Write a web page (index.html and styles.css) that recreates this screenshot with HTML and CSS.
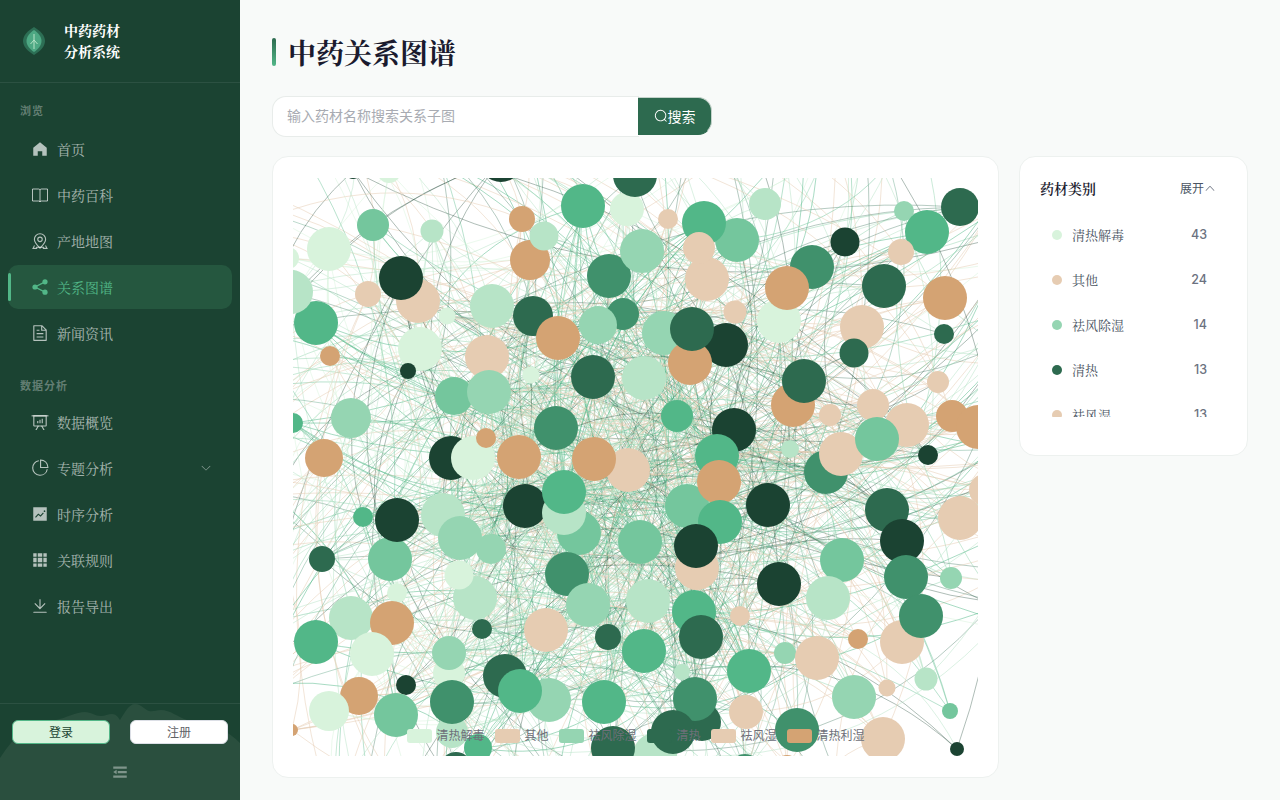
FILE: index.html
```html
<!DOCTYPE html>
<html lang="zh-CN">
<head>
<meta charset="utf-8">
<title>中药关系图谱</title>
<link rel="stylesheet" href="styles.css">
</head>
<body>
<div class="app">
  <aside class="sidebar">
    <header class="brand">
      <svg class="brand-logo" viewBox="0 0 22 28" aria-hidden="true">
        <path class="leaf-outer" d="M11 0C5 3.500 0 8.500 0 14s5 10.500 11 14c6-3.500 11-8.500 11-14S17 3.500 11 0z"/>
        <path class="leaf-inner" d="M11 3C7 5.500 3.500 9.500 3.500 14S7 22.500 11 25c4-2.500 7.500-6.500 7.500-11S15 5.500 11 3z"/>
        <path class="leaf-vein" d="M11 7v15M11 13l-3.500 4M11 13l3.500 4"/>
      </svg>
      <div class="brand-name">中药药材<br>分析系统</div>
    </header>
    <nav class="nav">
      <div class="nav-group">
        <div class="nav-label">浏览</div>
        <a class="nav-item"><svg class="ico" viewBox="0 0 1024 1024"><path d="M512 128 128 447.936V896h255.936V640H640v256h255.936V447.936z"/></svg><span>首页</span></a>
        <a class="nav-item"><svg class="ico ico-line" viewBox="0 0 18 18"><path d="M1.500 3h6.200c.7 0 1.300.4 1.300 1.200 0-.8.6-1.200 1.300-1.200h6.200v12h-6.200c-.7 0-1.300.3-1.300 1-.0-.7-.6-1-1.300-1H1.500zM9 4.200V16"/></svg><span>中药百科</span></a>
        <a class="nav-item"><svg class="ico" viewBox="0 0 1024 1024"><path d="M800 416a288 288 0 1 0-576 0c0 118.144 94.528 272.128 288 456.576C705.472 688.128 800 534.144 800 416M512 960C277.312 746.688 160 565.312 160 416a352 352 0 0 1 704 0c0 149.312-117.312 330.688-352 544"/><path d="M512 512a96 96 0 1 0 0-192 96 96 0 0 0 0 192m0 64a160 160 0 1 1 0-320 160 160 0 0 1 0 320m345.600 192L960 960H672v-64H352v64H64l102.400-192zm-68.928 0H235.328l-76.800 128H288v-64h448v64h129.472z"/></svg><span>产地地图</span></a>
        <a class="nav-item is-active"><svg class="ico" viewBox="0 0 18 18"><circle cx="4" cy="9" r="2.600"/><circle cx="14" cy="3.800" r="2.600"/><circle cx="14" cy="14.200" r="2.600"/><path class="share-link" d="M14 3.800 4 9l10 5.200"/></svg><span>关系图谱</span></a>
        <a class="nav-item"><svg class="ico" viewBox="0 0 1024 1024"><path d="M832 384H576V128H192v768h640zm-26.496-64L640 154.496V320zM160 64h480l256 256v608a32 32 0 0 1-32 32H160a32 32 0 0 1-32-32V96a32 32 0 0 1 32-32m160 448h384v64H320zm0-192h160v64H320zm0 384h384v64H320z"/></svg><span>新闻资讯</span></a>
      </div>
      <div class="nav-group">
        <div class="nav-label">数据分析</div>
        <a class="nav-item"><svg class="ico" viewBox="0 0 1024 1024"><path d="M32 128h960v64H32z"/><path d="M192 192v512h640V192zm-64-64h768v576a64 64 0 0 1-64 64H192a64 64 0 0 1-64-64z"/><path d="M322.176 960H248.320l144.640-250.560 55.424 32zm453.888 0h-73.856L576 741.440l55.424-32zM352 448h64v128h-64zM480 384h64v192h-64zM608 320h64v256h-64z"/></svg><span>数据概览</span></a>
        <a class="nav-item"><svg class="ico" viewBox="0 0 1024 1024"><path d="M448 68.480v64.832A384.128 384.128 0 0 0 512 896a384.128 384.128 0 0 0 378.688-320h64.768A448.128 448.128 0 0 1 64 512 448.128 448.128 0 0 1 448 68.480z"/><path d="M576 97.280V448h350.720a384.064 384.064 0 0 0-350.720-350.720zM512 64V33.152A448 448 0 0 1 990.848 512H512z"/></svg><span>专题分析</span><svg class="ico-chev" viewBox="0 0 1024 1024"><path d="M831.872 340.864 512 652.672 192.128 340.864a30.592 30.592 0 0 0-42.752 0 29.120 29.120 0 0 0 0 41.600L489.664 714.240a32 32 0 0 0 44.672 0l340.288-331.712a29.120 29.120 0 0 0 0-41.728 30.592 30.592 0 0 0-42.752 0z"/></svg></a>
        <a class="nav-item"><svg class="ico" viewBox="0 0 1024 1024"><path d="M128 896V128h768v768zm291.712-327.296 128 102.400 180.160-201.792-47.744-42.624-139.840 156.608-128-102.400-180.160 201.792 47.744 42.624zM816 352a48 48 0 1 0-96 0 48 48 0 0 0 96 0"/></svg><span>时序分析</span></a>
        <a class="nav-item"><svg class="ico" viewBox="0 0 1024 1024"><path d="M640 384v256H384V384zm64 0h192v256H704zm-64 512H384V704h256zm64 0V704h192v192zm-64-768v192H384V128zm64 0h192v192H704zM320 384v256H128V384zm0 512H128V704h192zm0-768v192H128V128z"/></svg><span>关联规则</span></a>
        <a class="nav-item"><svg class="ico" viewBox="0 0 1024 1024"><path d="M160 832h704a32 32 0 1 1 0 64H160a32 32 0 1 1 0-64m384-253.696 236.288-236.352 45.248 45.248L508.800 704 192 387.200l45.248-45.248L480 584.704V128h64z"/></svg><span>报告导出</span></a>
      </div>
    </nav>
    <footer class="side-foot">
      <svg class="mountains" viewBox="0 0 240 96" preserveAspectRatio="none" aria-hidden="true">
        <path d="M0 54C8 42 14 34 22 29 32 23 44 19 56 16 66 14 76 8 85 8 91 8 95 12 101 12 105 12 108 10 112 10 116 10 118 13 120 16 125 8 129 0 135 0 141 0 144 5 149 7 153 8 156 6 161 6 170 6 178 13 187 16 197 19 208 20 217 23 226 27 234 33 240 39V96H0z"/>
      </svg>
      <div class="auth-row">
        <button class="btn btn-login">登录</button>
        <button class="btn btn-reg">注册</button>
      </div>
      <svg class="fold" viewBox="0 0 1024 1024"><path d="M896 192H128v128h768zm0 256H384v128h512zm0 256H128v128h768zM320 384 128 512l192 128z"/></svg>
    </footer>
  </aside>

  <main class="main">
    <h1 class="page-title">中药关系图谱</h1>
    <div class="search">
      <input class="search-input" type="text" placeholder="输入药材名称搜索关系子图">
      <button class="search-btn"><svg class="search-ico" viewBox="0 0 1024 1024"><path d="m795.904 750.720 124.992 124.928a32 32 0 0 1-45.248 45.248L750.656 795.904a416 416 0 1 1 45.248-45.248zM480 832a352 352 0 1 0 0-704 352 352 0 0 0 0 704"/></svg>搜索</button>
    </div>
    <div class="content">
      <section class="card chart-card">
        <div class="chart">
          <svg id="graph" class="graph" viewBox="293 178 685 578" aria-label="中药关系图谱"></svg>
          <div class="legend">
            <div class="lg"><i class="sw c-a"></i><span>清热解毒</span></div>
            <div class="lg"><i class="sw c-e"></i><span>其他</span></div>
            <div class="lg"><i class="sw c-g"></i><span>祛风除湿</span></div>
            <div class="lg"><i class="sw c-d"></i><span>清热</span></div>
            <div class="lg"><i class="sw c-e"></i><span>祛风湿</span></div>
            <div class="lg"><i class="sw c-t"></i><span>清热利湿</span></div>
          </div>
        </div>
      </section>
      <section class="card side-card">
        <div class="side-head">
          <h2 class="side-title">药材类别</h2>
          <button class="toggle">展开<svg class="toggle-ico" viewBox="0 0 1024 1024"><path d="m488.832 344.320-339.840 356.672a32 32 0 0 0 0 44.160l.384.384a29.440 29.440 0 0 0 42.688 0l320-335.872 319.872 335.872a29.440 29.440 0 0 0 42.688 0l.384-.384a32 32 0 0 0 0-44.160L535.168 344.320a32 32 0 0 0-46.336 0"/></svg></button>
        </div>
        <ul class="cat-list">
          <li class="cat"><i class="dot c-a"></i><span class="cat-name">清热解毒</span><b class="cat-num">43</b></li>
          <li class="cat"><i class="dot c-e"></i><span class="cat-name">其他</span><b class="cat-num">24</b></li>
          <li class="cat"><i class="dot c-g"></i><span class="cat-name">祛风除湿</span><b class="cat-num">14</b></li>
          <li class="cat"><i class="dot c-d"></i><span class="cat-name">清热</span><b class="cat-num">13</b></li>
          <li class="cat"><i class="dot c-e"></i><span class="cat-name">祛风湿</span><b class="cat-num">13</b></li>
        </ul>
      </section>
    </div>
  </main>
</div>
<script src="graph.js"></script>
</body>
</html>
```
FILE: styles.css
```css
* { box-sizing: border-box; }
html, body { margin: 0; height: 100%; }
body {
  font-family: Inter, "Noto Serif CJK SC", "Noto Sans CJK SC", serif;
  background: #f8faf9;
  color: #1a1a2e;
  overflow: hidden;
}
.app { display: flex; height: 800px; }

/* sidebar */
.sidebar {
  width: 240px;
  flex: none;
  display: flex;
  flex-direction: column;
  background: #1b4332;
}
.brand {
  height: 83px;
  flex: none;
  display: flex;
  align-items: center;
  gap: 19px;
  padding: 0 0 0 23px;
  border-bottom: 1px solid rgba(255, 255, 255, .08);
}
.brand-logo { width: 22px; height: 28px; flex: none; }
.leaf-outer { fill: #2d6f55; }
.leaf-inner { fill: #4da883; }
.leaf-vein { fill: none; stroke: #b7e4c7; stroke-width: 1; }
.brand-name { font-size: 14px; line-height: 21px; font-weight: 700; color: #fff; }
.nav { flex: 1; padding-top: 20px; }
.nav-group + .nav-group { margin-top: 23px; }
.nav-group + .nav-group .nav-label { margin-bottom: 8px; }
.nav-label {
  height: 14px;
  line-height: 14px;
  margin-bottom: 10px;
  padding-left: 20px;
  font-family: "Noto Sans CJK SC", sans-serif;
  font-size: 11px;
  font-weight: 700;
  letter-spacing: 1px;
  color: rgba(255, 255, 255, .32);
}
.nav-item {
  position: relative;
  display: flex;
  align-items: center;
  height: 44px;
  margin: 0 8px 2px;
  padding-left: 23px;
  border-radius: 10px;
  font-size: 14px;
  color: rgba(255, 255, 255, .62);
}
.ico { width: 18px; height: 18px; margin-right: 8px; flex: none; fill: rgba(255, 255, 255, .68); }
.ico-line { fill: none; stroke: rgba(255, 255, 255, .68); stroke-width: 1; }
.ico-chev { width: 12px; height: 12px; margin-left: auto; margin-right: 20px; fill: rgba(255, 255, 255, .5); }
.share-link { fill: none; stroke: currentColor; stroke-width: 1.300; }
.nav-item.is-active { background: #25573f; color: #52b788; }
.nav-item.is-active .ico { fill: #52b788; }
.nav-item.is-active::before {
  content: "";
  position: absolute;
  left: 0;
  top: 8px;
  width: 3px;
  height: 28px;
  border-radius: 2px;
  background: #52b788;
}
.side-foot {
  position: relative;
  height: 97px;
  flex: none;
  display: flex;
  flex-direction: column;
  align-items: center;
  padding: 16px 12px 0;
  border-top: 1px solid rgba(255, 255, 255, .08);
}
.mountains { position: absolute; left: 0; right: 0; bottom: 0; width: 240px; height: 96px; fill: #2a4f3e; }
.auth-row { position: relative; display: flex; justify-content: space-between; width: 100%; }
.btn {
  width: 98px;
  height: 24px;
  padding: 0 0 2px;
  border-radius: 6px;
  font: 12px "Noto Sans CJK SC", sans-serif;
}
.btn-login { background: #d8f3dc; border: 1px solid #52b788; color: #1b4332; }
.btn-reg { background: #fff; border: 1px solid #dcdfe6; color: #606266; }
.fold { position: relative; width: 18px; height: 18px; margin-top: 19px; fill: rgba(255, 255, 255, .4); }

/* main */
.main {
  flex: 1;
  min-width: 0;
  display: flex;
  flex-direction: column;
  padding: 38px 32px 22px;
}
.page-title {
  position: relative;
  margin: 0;
  padding-left: 16px;
  height: 28px;
  line-height: 28px;
  font-family: "Noto Serif CJK SC", "Noto Sans CJK SC", serif;
  font-size: 28px;
  font-weight: 700;
  color: #1a1a2e;
}
.page-title::before {
  content: "";
  position: absolute;
  left: 0;
  top: 0;
  width: 4px;
  height: 28px;
  border-radius: 2px;
  background: linear-gradient(180deg, #2d6a4f, #52b788);
}
.search { display: flex; align-items: flex-start; width: 440px; height: 41px; margin-top: 30px; }
.search-input {
  width: 367px;
  height: 41px;
  padding: 0 14px 3px;
  border: 1px solid #e8ecea;
  border-radius: 14px 0 0 14px;
  border-right: 0;
  background: #fff;
  outline: 0;
  font: 14px "Noto Sans CJK SC", sans-serif;
  color: #1a1a2e;
}
.search-input::placeholder { color: #a8abb2; opacity: 1; }
.search-btn {
  display: flex;
  align-items: center;
  justify-content: center;
  width: 74px;
  height: 38px;
  margin: 1px 0 0 -1px;
  padding: 0;
  border-style: solid;
  border-width: 1px 1px 1px 0;
  border-color: #c4d3cb #c4d3cb #2d6a4f;
  border-radius: 0 14px 14px 0;
  background: #2d6a4f;
  color: #fff;
  font: 14px "Noto Sans CJK SC", sans-serif;
}
.search-ico { width: 14px; height: 14px; fill: #fff; }
.content { flex: 1; min-height: 0; display: flex; align-items: flex-start; gap: 20px; margin-top: 19px; }
.card { background: #fff; border: 1px solid #edf1ef; border-radius: 16px; }
.chart-card { flex: 1; min-width: 0; height: 622px; padding: 21px 20px; }
.chart { position: relative; height: 578px; }
.graph { display: block; width: 685px; height: 578px; }
.legend {
  position: absolute;
  left: 113.500px;
  top: 550px;
  display: flex;
  gap: 10px;
  align-items: center;
}
.lg { display: flex; align-items: center; gap: 5px; font: 12px/14px "Noto Sans CJK SC", sans-serif; color: #6e7079; }
.lg span { padding-bottom: 2px; }
.sw { width: 25px; height: 14px; border-radius: 3px; }
.c-a { background: #d8f3dc; }
.c-e { background: #e6ccb2; }
.c-g { background: #95d5b2; }
.c-d { background: #2d6a4f; }
.c-t { background: #d4a373; }

.side-card { width: 229px; flex: none; height: 300px; padding: 0 20px; }
.side-head { display: flex; align-items: center; justify-content: space-between; height: 49px; margin-top: 6px; padding-right: 11px; }
.side-title { margin: 0; font-size: 14px; font-weight: 600; color: #1a1a2e; font-family: "Noto Serif CJK SC", "Noto Sans CJK SC", serif; }
.toggle { display: flex; align-items: center; padding: 0; border: 0; background: none; font: 12px "Noto Sans CJK SC", sans-serif; color: #4b5563; }
.toggle-ico { width: 12px; height: 12px; fill: #6b7280; }
.cat-list { list-style: none; margin: 0; padding: 0; height: 205px; overflow: hidden; }
.cat { display: flex; align-items: center; height: 45px; padding: 0 20px 0 12px; }
.dot { width: 10px; height: 10px; border-radius: 50%; flex: none; margin-right: 10px; }
.cat-name { font-size: 13px; color: #4b5563; }
.cat-num { margin-left: auto; font-size: 12.500px; font-weight: 500; color: #6b7280; }
```
FILE: graph.js
```js
// Force-graph snapshot: node positions as x y r colour, painted back to front.
var COLORS = { a: '#d8f3dc', e: '#e6ccb2', t: '#d4a373', g: '#95d5b2', m: '#b7e4c7', l: '#74c69d', b: '#52b788', k: '#40916c', d: '#2d6a4f', n: '#1b4332' };
var NODES = [
  '501 160 22 n', '389 171 12 a', '353 171 8 n', '373 225 16 l', '432 231 11.5 m', '329 249 22 a', '288 258 11 a',
  '418 301 22 e', '401 278 22 n', '368 294 13 e', '316 323 22 b', '291 292 22 m', '447 316 8.500 a', '420 349 22 a',
  '330 356 10 t', '408 371 8 n', '487 357 22 e', '492 306 22 m', '454 396 19 l', '489 392 22 g', '533 316 20 d',
  '558 338 22 t', '530 260 20 t', '522 219 13 t', '544 236 14.500 m', '583 206 22 b', '627 209 17 a', '635 175 22 d',
  '609 276 22 k', '642 251 22 g', '623 314 16 k', '598 325 19 g', '593 377 22 d', '531 375 8.500 a', '556 428 22 k',
  '351 418 20 g', '293 423 10 b', '324 458 19 t', '451 458 22 n', '473 458 22 a', '486 438 10 t', '519 457 22 t',
  '628 470 22 e', '594 459 22 t', '765 204 16 m', '668 219 10 e', '737 240 22 l', '704 223 22 b', '707 279 22 e',
  '699 248 16 e', '845 242 14.500 n', '812 267 22 k', '779 321 22 a', '787 288 22 t', '904 211 10 g', '927 232 22 b',
  '960 207 19 d', '901 252 13 e', '884 286 22 d', '945 298 22 t', '862 327 22 e', '854 353 14.500 d', '944 334 10 d',
  '735 312 11.500 e', '726 345 22 n', '664 333 22 g', '690 363 22 t', '692 329 22 d', '644 378 22 m', '793 405 22 t',
  '804 381 22 d', '938 382 11 e', '830 415 11 e', '907 425 22 e', '873 405 16 e', '952 416 16 t', '978 427 22 t',
  '928 455 10 n', '826 472 22 k', '841 454 22 e', '877 439 22 l', '790 449 9 m', '677 416 16 b', '734 430 22 n',
  '717 456 22 b', '687 506 22 l', '719 482 22 t', '720 522 22 b', '768 505 22 n', '887 510 22 d', '902 541 22 n',
  '985 490 16 e', '960 518 22 e', '697 568 22 e', '696 546 22 n', '842 560 22 l', '906 577 22 k', '951 578 11 g',
  '779 584 22 n', '828 598 22 m', '363 517 10 b', '390 559 22 l', '397 520 22 n', '322 559 13 d', '443 515 22 m',
  '491 549 15 g', '460 538 22 g', '525 506 22 n', '579 533 22 l', '564 513 22 m', '564 492 22 b', '640 542 22 l',
  '397 593 10 a', '475 598 22 m', '459 575 14.500 a', '567 574 22 k', '588 605 22 g', '648 601 22 m', '351 618 22 m',
  '392 623 22 t', '372 654 22 a', '316 642 22 b', '482 629 10 d', '546 630 22 e', '608 637 13 d', '644 651 22 b',
  '694 612 22 b', '701 637 22 d', '740 616 10 e', '858 639 10 t', '902 642 22 e', '921 616 22 k', '785 653 11 g',
  '817 658 22 e', '749 671 22 b', '682 672 8 m', '449 673 16 a', '449 653 17 g', '406 685 10 n', '505 676 22 d',
  '359 696 19 t', '329 711 20 a', '396 715 22 l', '452 732 16 m', '452 702 22 k', '549 700 22 g', '520 691 22 b',
  '604 702 22 b', '478 748 14 b', '292 730 6 t', '456 768 16 d', '854 697 22 g', '887 688 8.500 e', '926 679 11.500 m',
  '702 722 19 d', '695 699 22 k', '746 712 17 e', '950 711 8 l', '655 755 22 m', '673 732 22 d', '613 748 22 d',
  '797 730 22 k', '883 739 22 e', '957 749 7 n', '745 770 16 k', '787 767 12 t'
].map(function (s) {
  var p = s.split(' ');
  return { x: +p[0], y: +p[1], r: +p[2], key: p[3], c: COLORS[p[3]] };
});

var seed = 20240611;
function rnd() {
  seed = (seed + 0x6D2B79F5) | 0;
  var t = Math.imul(seed ^ (seed >>> 15), 1 | seed);
  t = (t + Math.imul(t ^ (t >>> 7), 61 | t)) ^ t;
  return ((t ^ (t >>> 14)) >>> 0) / 4294967296;
}

var SVG_NS = 'http://www.w3.org/2000/svg';
var graph = document.getElementById('graph');

function dist2(a) {
  return Math.pow(a.x - 600, 2) + Math.pow(a.y - 500, 2);
}
function near(a, b) {
  return dist2(a) < dist2(b) ? a : b;
}
function pick() {
  return NODES[Math.floor(rnd() * NODES.length)];
}
function anchorOutside() {
  var side = Math.floor(rnd() * 4);
  if (side === 0) return { x: 250 + rnd() * 700, y: 110 + rnd() * 40 };
  if (side === 1) return { x: 220 + rnd() * 50, y: 180 + rnd() * 560 };
  if (side === 2) return { x: 1020, y: 150 + rnd() * 500 };
  return { x: 300 + rnd() * 550, y: 800 };
}

var frag = document.createDocumentFragment();
for (var i = 0; i < 1250; i++) {
  var from = rnd() < 0.3 ? near(pick(), pick()) : pick();
  var to = rnd() < 0.7 ? near(near(pick(), pick()), pick()) : anchorOutside();
  if (from === to) continue;
  var dx = to.x - from.x, dy = to.y - from.y;
  var k = 0.16 + rnd() * 0.14;
  var cx = (from.x + to.x) / 2 - dy * k;
  var cy = (from.y + to.y) / 2 + dx * k;
  var dark = from.key === 'n' || from.key === 'd' || from.key === 'k';
  var paled = dark && rnd() < 0.3;
  var path = document.createElementNS(SVG_NS, 'path');
  path.setAttribute('d', 'M' + from.x + ' ' + from.y + 'Q' + cx.toFixed(1) + ' ' + cy.toFixed(1) + ' ' + to.x + ' ' + to.y);
  path.setAttribute('fill', 'none');
  path.setAttribute('stroke', paled ? COLORS.m : (from.key === 't' ? COLORS.e : from.c));
  path.setAttribute('stroke-width', '1');
  path.setAttribute('stroke-opacity', dark && !paled ? '0.35' : '0.5');
  frag.appendChild(path);
}
NODES.forEach(function (n) {
  var c = document.createElementNS(SVG_NS, 'circle');
  c.setAttribute('cx', n.x);
  c.setAttribute('cy', n.y);
  c.setAttribute('r', n.r);
  c.setAttribute('fill', n.c);
  frag.appendChild(c);
});
graph.appendChild(frag);
```
